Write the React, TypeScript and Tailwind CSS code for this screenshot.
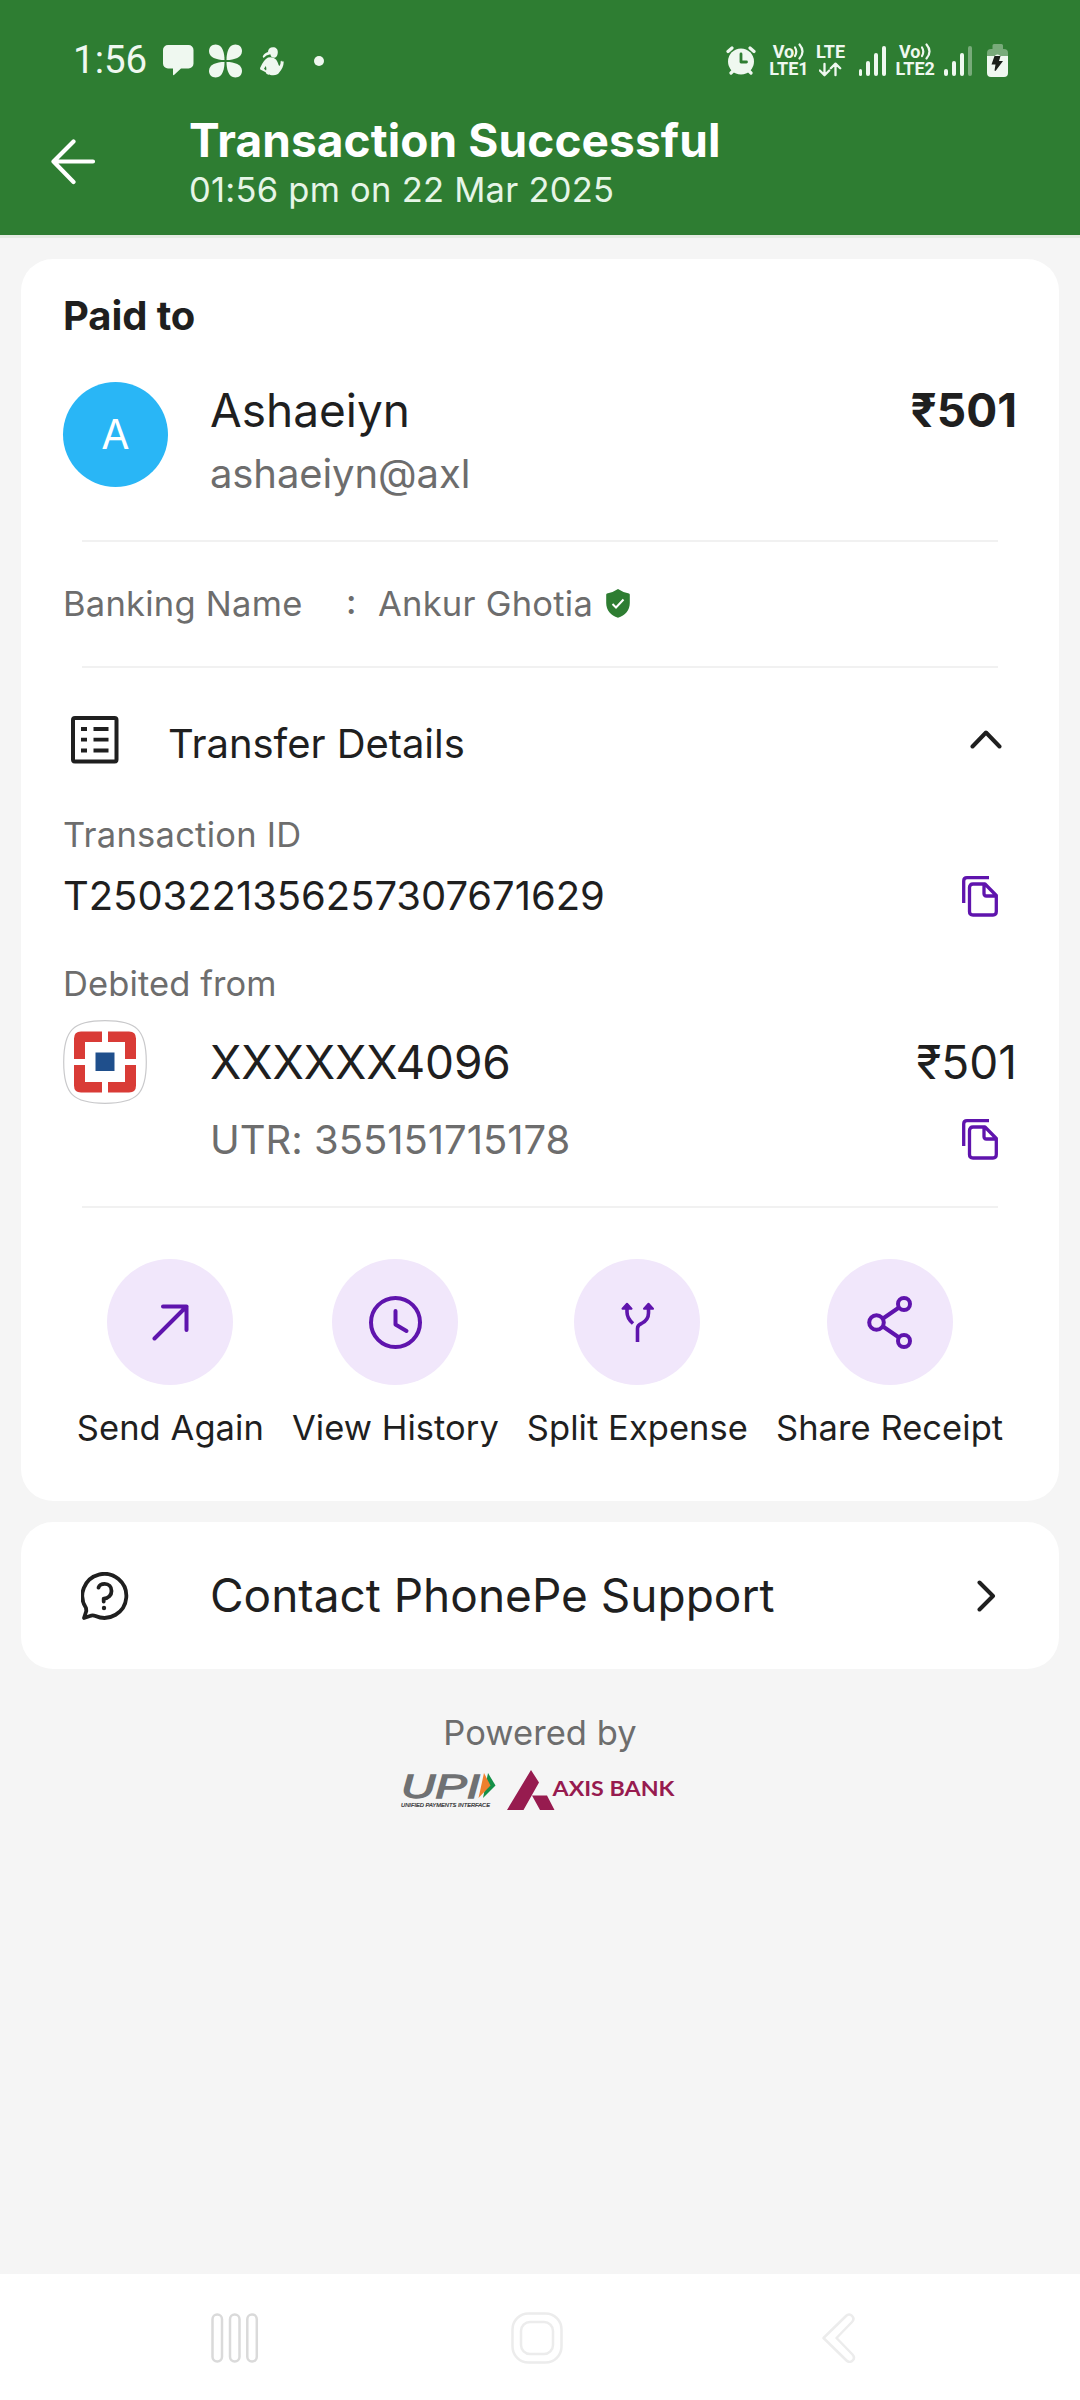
import type { ReactNode } from "react";

const PURPLE = "#5f14ad";
const INK = "#1f1f1f";

function ChatIcon() {
  return (
    <svg width="31" height="32" viewBox="0 0 31 32" fill="#eff8f0">
      <path d="M5 0h20.500a5 5 0 0 1 5 5v13.500a5 5 0 0 1-5 5H18l-7 6.500q-1 .5-1-.800V23.500H5a5 5 0 0 1-5-5V5a5 5 0 0 1 5-5z" />
    </svg>
  );
}

function CloverIcon() {
  const petal = "M-1-1C-1-7-2.500-16.500-9.800-16.500c-4 0-6.700 2.800-6.700 6.500C-16.500-3.500-9-1-1-1z";
  return (
    <svg width="33" height="34" viewBox="-16.5 -17 33 34" fill="#eff8f0">
      <path d={petal} />
      <path d={petal} transform="scale(-1 1)" />
      <path d={petal} transform="scale(1 -1)" />
      <path d={petal} transform="scale(-1 -1)" />
    </svg>
  );
}

function PersonIcon() {
  return (
    <svg width="24" height="29" viewBox="0 0 24 29" fill="#eff8f0">
      <path d="M8 5C8 2 10 .3 13 .3s5 2 4.800 5c0 2.500-1 5-3 5.500-3 0-4-1-4.500-3.500Q6 8 3.500 11L2.700 9.500Q4 6 8 5z" />
      <path d="M8 10.500q5-1 8 2c2 2.500 2.500 6 3.500 6.500q1.300-1.500 1.200-5l1-.3.300 1.500.9-1.500.8 1.300c0 4-2 7.500-4.500 10.500-1 2-3 2.700-6 2.700-4 0-7-.8-7.500-3L.3 22.500q-.5-1 0-2C3 15 5 12 8 10.500zM5.800 19 4 21.800l2 1.800q.8-2-.2-4.600z" fillRule="evenodd" />
    </svg>
  );
}

function AlarmIcon() {
  return (
    <svg width="30" height="31" viewBox="0 0 30 31" fill="none" strokeLinecap="round">
      <circle cx="15" cy="16.500" r="13" fill="#eff8f0" />
      <path d="M2 6.500 6 3M28 6.500 24 3M5 28l3-3M25 28l-3-3" stroke="#eff8f0" strokeWidth="3.200" />
      <path d="M15 9v8h5.500" stroke="#2e7d32" strokeWidth="2.800" strokeLinejoin="round" />
    </svg>
  );
}

function VoLte({ label }: { label: string }) {
  return (
    <div className="flex flex-col items-center pb-px text-[18px] leading-[17.5px] font-bold text-[#eff8f0]">
      <div className="flex items-center pr-px">
        Vo
        <svg width="10" height="17" viewBox="0 0 10 17" fill="none" stroke="#eff8f0" strokeWidth="2.200" strokeLinecap="round">
          <path d="M1 4.500q2.600 4 0 8.500M5.500 1.500q6 7 0 14" />
        </svg>
      </div>
      <div>{label}</div>
    </div>
  );
}

function Signal({ weak }: { weak?: boolean }) {
  return (
    <div className="flex h-[30px] items-end gap-[4.200px]">
      <div className="h-[7px] w-[3.800px] rounded-full bg-[#eff8f0]" />
      <div className="h-[15px] w-[3.800px] rounded-full bg-[#eff8f0]" />
      <div className="h-[22.500px] w-[3.800px] rounded-full bg-[#eff8f0]" />
      <div className={weak ? "h-[29.500px] w-[3.800px] rounded-full bg-[#78ab7a]" : "h-[29.500px] w-[3.800px] rounded-full bg-[#eff8f0]"} />
    </div>
  );
}

function BatteryIcon() {
  return (
    <svg width="21" height="33" viewBox="0 0 21 33">
      <path d="M7 0h7.500q1.500 0 1.500 1.500V5h1q4 0 4 4v3H0V9q0-4 4-4h1.500V1.500Q5.500 0 7 0z" fill="#78ab7a" />
      <path d="M0 12h8q0-1.500 2.500-1.500T13 12h8v17q0 4-4 4H4q-4 0-4-4z" fill="#eff8f0" />
      <path d="M7.500 12h6L12 17h4L8.500 27l-1-.500L8.500 20.500H4.500z" fill="#1b211b" />
    </svg>
  );
}

function StatusBar() {
  return (
    <div className="flex h-[122px] items-center pr-[72px] pl-[73px] font-['Roboto']">
      <span className="w-[90px] pb-[2px] text-[38.500px] leading-none text-[#eff8f0]">1:56</span>
      <ChatIcon />
      <div className="ml-[15px]">
        <CloverIcon />
      </div>
      <div className="ml-[18px]">
        <PersonIcon />
      </div>
      <div className="ml-[30px] size-[10px] rounded-full bg-[#eff8f0]" />
      <div className="ml-auto flex items-center pb-px">
        <AlarmIcon />
        <div className="ml-[14px] w-[39px]">
          <VoLte label="LTE1" />
        </div>
        <div className="ml-[6px] flex w-[32px] flex-col items-center text-[18px] leading-[17.500px] font-bold text-[#eff8f0]">
          LTE
          <svg width="24" height="17" viewBox="0 0 24 17" fill="none" stroke="#eff8f0" strokeWidth="2.300" strokeLinecap="round" strokeLinejoin="round">
            <path d="M5.500 3v11M.800 9.500l4.700 4.700 4.700-4.700M16.500 14.200V3M11.800 7.300l4.700-4.700 4.700 4.700" />
          </svg>
        </div>
        <div className="ml-[12px]">
          <Signal />
        </div>
        <div className="ml-[9px] w-[40px]">
          <VoLte label="LTE2" />
        </div>
        <div className="ml-[9px]">
          <Signal weak />
        </div>
        <div className="ml-[15px]">
          <BatteryIcon />
        </div>
      </div>
    </div>
  );
}

function Header() {
  return (
    <header className="h-[238px] border-b-[3px] border-[#e5ebe3] bg-[#2e7d32]">
      <StatusBar />
      <div className="flex h-[113px] pl-[51px] text-white">
        <svg className="mt-[17px]" width="46" height="46" viewBox="0 0 46 46" fill="none" stroke="#fff" strokeWidth="4.200" strokeLinecap="round" strokeLinejoin="round">
          <path d="M42 22.500H3M22.500 2.500l-20 20 20 20.500" />
        </svg>
        <div className="ml-[92px] flex flex-col">
          <h1 className="-mt-[10px] text-[46px] leading-[56px] font-bold tracking-[0.100px]">Transaction Successful</h1>
          <p className="mt-[2px] text-[34.500px] leading-[40px] tracking-[0.250px] text-[#e6f5e7]">01:56 pm on 22 Mar 2025</p>
        </div>
      </div>
    </header>
  );
}

function Divider() {
  return <div className="mx-[19px] h-[2px] bg-[#f1f1f1]" />;
}

function ShieldIcon() {
  return (
    <svg width="24" height="29" viewBox="0 0 24 29" fill="none">
      <path d="M12 0q5 3.500 11 4.500.8.200.8 1.200V14c0 7-4.500 12.500-11.800 14.800C4.700 26.500.2 21 .2 14V5.700q0-1 .8-1.200Q7 3.500 12 0z" fill="#2e7d32" />
      <path d="m6.500 15 3.500 3.500 7.500-8" stroke="#fff" strokeWidth="2" />
    </svg>
  );
}

function DetailsIcon() {
  return (
    <svg width="48" height="48" viewBox="0 0 48 48" fill="none" stroke={INK}>
      <rect x="2" y="2" width="43.500" height="43.500" rx="2" strokeWidth="4" />
      <path d="M10 13h6M22.500 13h15M10 23.700h6M22.500 23.700h15M10 34.500h6M22.500 34.500h15" strokeWidth="3.800" />
    </svg>
  );
}

function CopyIcon() {
  return (
    <svg className="mr-[19px]" width="36" height="41" viewBox="0 0 36 41" fill="none" stroke={PURPLE} strokeWidth="3.300" strokeLinejoin="round">
      <path d="M1.700 27V5q0-3.300 3.300-3.300h22" />
      <path d="M23 8H11q-3.500 0-3.500 3.500v24Q7.500 39 11 39h20q3.300 0 3.300-3.500V19.500zM22 8v9.500q0 2.500 2.500 2.500h10" />
    </svg>
  );
}

function HdfcLogo() {
  return (
    <svg width="84" height="84" viewBox="0 0 84 84">
      <path d="M42 .700C74 .700 83.300 10 83.300 42S74 83.300 42 83.300.700 74 .700 42 10 .700 42 .700z" fill="#fff" stroke="#c9c9cb" strokeWidth="1.200" />
      <path d="M18 11.500h21v10.500H22v17H11V18.500q0-7 7-7zM45 11.500h21q7 0 7 7V39H62V22H45zM11 45h11v17h17v10.500H18q-7 0-7-7zM62 45h11v20.500q0 7-7 7H45V62h17z" fill="#d93b36" />
      <path d="M32.500 32.500h19v18.500h-19z" fill="#1f4f8c" />
    </svg>
  );
}

function SendIcon() {
  return (
    <svg width="37" height="37" viewBox="0 0 37 37" fill="none" stroke={PURPLE} strokeWidth="4" strokeLinecap="round" strokeLinejoin="round">
      <path d="M2.500 34.500 34.500 2.500M11 2.500h23.500V26" />
    </svg>
  );
}

function ClockIcon() {
  return (
    <svg width="53" height="53" viewBox="0 0 53 53" fill="none" stroke={PURPLE} strokeWidth="4" strokeLinecap="round" strokeLinejoin="round">
      <circle cx="26.500" cy="26.500" r="24.500" />
      <path d="M26.500 15v13.500l11 6.500" />
    </svg>
  );
}

function SplitIcon() {
  return (
    <svg width="33" height="40" viewBox="0 0 33 40" fill="none" stroke={PURPLE} strokeWidth="3.600">
      <path d="M6 5v5c0 5 2.500 8.500 6 11.500M27.500 5v6c0 5-3 8.500-7 10.500q-4 1.500-4 5V40" />
      <path d="M1.500 6.700 6 1.800l4.500 4.900zM23 6.700l4.500-4.900L32 6.700z" fill={PURPLE} strokeWidth="2" strokeLinejoin="round" />
    </svg>
  );
}

function ShareIcon() {
  return (
    <svg width="45" height="53" viewBox="0 0 45 53" fill="none" stroke={PURPLE} strokeWidth="4">
      <circle cx="37" cy="8" r="6" />
      <circle cx="9.500" cy="26.500" r="7.300" />
      <circle cx="37" cy="45" r="6" />
      <path d="m16 22.500 16-11M16 30.500 32 41.500" />
    </svg>
  );
}

const ACTIONS: { label: string; icon: ReactNode }[] = [
  { label: "Send Again", icon: <SendIcon /> },
  { label: "View History", icon: <ClockIcon /> },
  { label: "Split Expense", icon: <SplitIcon /> },
  { label: "Share Receipt", icon: <ShareIcon /> },
];

function PaymentCard() {
  return (
    <section className="mx-[21px] mt-[21px] h-[1242px] rounded-[32px] bg-white px-[42px] pt-[33px]">
      <h2 className="text-[40px] leading-[48px] font-bold tracking-[-0.100px]">Paid to</h2>

      <div className="mt-[42px] flex items-start">
        <div className="flex size-[105px] items-center justify-center rounded-full bg-[#29b6f6] text-[41px] text-white">A</div>
        <div className="ml-[42px]">
          <div className="text-[46px] leading-[56px]">Ashaeiyn</div>
          <div className="mt-[12px] text-[40px] leading-[48px] tracking-[-0.100px] text-[#6d6d6d]">ashaeiyn@axl</div>
        </div>
        <div className="ml-auto text-[46px] leading-[56px] font-bold">₹501</div>
      </div>

      <div className="mt-[42px]">
        <Divider />
      </div>
      <div className="flex h-[124px] items-center pb-px text-[34.500px] tracking-[0.250px] text-[#6d6d6d]">
        <span className="w-[283px]">Banking Name</span>
        <span className="w-[32px] pb-[3px] font-medium">:</span>
        <span className="w-[228px]">Ankur Ghotia</span>
        <ShieldIcon />
      </div>
      <Divider />

      <div className="flex h-[143px] items-center pl-[8px]">
        <DetailsIcon />
        <span className="ml-[49px] pt-[8px] text-[40px] leading-[48px] tracking-[-0.050px]">Transfer Details</span>
        <svg className="mr-[15px] ml-auto" width="32" height="19" viewBox="0 0 32 19" fill="none" stroke={INK} strokeWidth="4" strokeLinecap="round" strokeLinejoin="round">
          <path d="M2.500 16.500 16 2.500l13.500 14" />
        </svg>
      </div>

      <div className="text-[34.500px] leading-[48px] tracking-[0.250px] text-[#6d6d6d]">Transaction ID</div>
      <div className="flex h-[74px] items-center justify-between text-[40px] tracking-[-0.050px]">
        T2503221356257307671629
        <CopyIcon />
      </div>
      <div className="mt-[27px] text-[34.500px] leading-[48px] tracking-[0.100px] text-[#6d6d6d]">Debited from</div>
      <div className="mt-[12px] flex h-[84px] items-center text-[46px]">
        <HdfcLogo />
        <span className="ml-[63px] tracking-[-0.150px]">XXXXXX4096</span>
        <span className="ml-auto">₹501</span>
      </div>
      <div className="flex h-[71px] items-center justify-between pl-[147px] text-[40px] tracking-[-0.020px] text-[#6d6d6d]">
        UTR: 355151715178
        <CopyIcon />
      </div>

      <div className="mt-[31px]">
        <Divider />
      </div>
      <div className="mt-[51px] flex justify-center gap-[28px]">
        {ACTIONS.map((action) => (
          <div key={action.label} className="flex flex-col items-center">
            <div className="flex size-[126px] items-center justify-center rounded-full bg-[#f1e7fb]">{action.icon}</div>
            <div className="mt-[19px] text-[34.500px] leading-[48px] tracking-[0.050px] whitespace-nowrap">{action.label}</div>
          </div>
        ))}
      </div>
    </section>
  );
}

function SupportCard() {
  return (
    <section className="mx-[21px] mt-[21px] flex h-[147px] items-center rounded-[32px] bg-white pl-[60px]">
      <svg width="48" height="48" viewBox="0 0 48 48" fill="none" stroke={INK} strokeWidth="3.800" strokeLinecap="round" strokeLinejoin="round">
        <path d="M5 36A22 22 0 1 1 14.500 44Q11.500 42.800 9 44L3 46 5.300 39z" />
        <path d="M17.500 15.600c1-2.800 3.500-3.700 6.200-3.700 4 0 6.800 3 6.800 7s-3 7.700-7.800 7.700v3" />
        <circle cx="23" cy="36" r="2.200" fill={INK} stroke="none" />
      </svg>
      <span className="ml-[81px] text-[46px]">Contact PhonePe Support</span>
      <svg className="mr-[63px] ml-auto" width="19" height="32" viewBox="0 0 19 32" fill="none" stroke={INK} strokeWidth="4" strokeLinecap="round" strokeLinejoin="round">
        <path d="m2.500 2.500 13.500 13.500-13.500 13.500" />
      </svg>
    </section>
  );
}

function PoweredBy() {
  return (
    <div className="mt-[40px] flex flex-col items-center">
      <div className="text-[34.500px] leading-[48px] tracking-[0.050px] text-[#6d6d6d]">Powered by</div>
      <div className="mt-[7px] flex h-[52px] w-[286px]">
        <svg width="104" height="52" viewBox="-4 -6 104 52">
          <text x="0" y="27.500" textLength="79" lengthAdjust="spacingAndGlyphs" fontFamily="Liberation Sans" fontSize="34" fontStyle="italic" fill="#6f7173" stroke="#6f7173" strokeWidth="1.300">
            UPI
          </text>
          <path d="m87 3 7.500 12.500L82 28z" fill="#149048" />
          <path d="m83 3 6.500 12.500L77.500 28z" fill="#ee7f2d" />
          <text x="0" y="36.500" textLength="89" lengthAdjust="spacingAndGlyphs" fontFamily="Liberation Sans" fontSize="5.800" fontStyle="italic" fill="#2c2c2e" stroke="#2c2c2e" strokeWidth="0.200">
            UNIFIED PAYMENTS INTERFACE
          </text>
        </svg>
        <svg width="182" height="52" viewBox="4 -6 182 52" fill="#971b4f">
          <path d="m34 0 8 12.500L26.500 40H10zM35 25.500h15L57.500 40H43z" />
          <text x="55.500" y="26" textLength="122" lengthAdjust="spacingAndGlyphs" fontFamily="Lato" fontSize="21" fontWeight="700">
            AXIS BANK
          </text>
        </svg>
      </div>
    </div>
  );
}

function NavBar() {
  return (
    <nav className="mt-auto flex h-[126px] items-center bg-white pt-[2px] pl-[211px]">
      <svg width="48" height="50" viewBox="0 0 48 50" fill="none" stroke="#dadada" strokeWidth="2.500">
        <rect x="1.500" y="1.500" width="9.500" height="47" rx="4.700" />
        <rect x="19" y="1.500" width="9.500" height="47" rx="4.700" />
        <rect x="36.300" y="1.500" width="9.500" height="47" rx="4.700" />
      </svg>
      <svg className="ml-[252px]" width="52" height="52" viewBox="0 0 52 52" fill="none" stroke="#ececec" strokeWidth="2.500">
        <rect x="1.500" y="1.500" width="49" height="49" rx="16" />
        <rect x="10" y="10" width="32" height="32" rx="9" />
      </svg>
      <svg className="ml-[259px]" width="34" height="50" viewBox="0 0 34 50" fill="none" stroke="#ececec" strokeWidth="2.500" strokeLinejoin="round">
        <path d="M1.500 25 24 3c4-4 10 1.500 6 6L14.500 25 30.500 41.500c4 4.500-2 10-6 6z" />
      </svg>
    </nav>
  );
}

export default function App() {
  return (
    <div className="flex h-[2400px] w-[1080px] flex-col bg-[#f5f5f5] font-['Inter',sans-serif] text-[#1f1f1f]">
      <Header />
      <PaymentCard />
      <SupportCard />
      <PoweredBy />
      <NavBar />
    </div>
  );
}
